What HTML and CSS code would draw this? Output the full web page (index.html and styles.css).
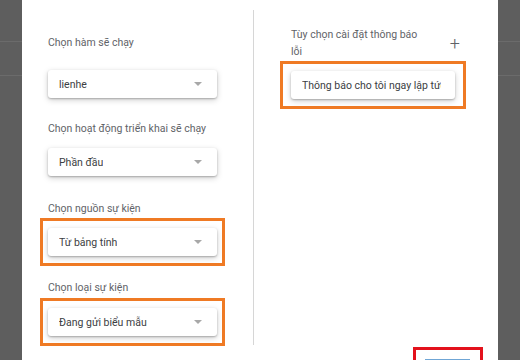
FILE: index.html
```html
<!DOCTYPE html>
<html>
<head>
  <title>Thêm trình kích hoạt</title>
  <link rel="stylesheet" href="styles.css">
</head>
<body>

  <div class="dialog">
    <div class="columns">

      <!-- Left column: function, deployment, event source, event type -->
      <div class="col-left">
        <div class="label label-first">Chọn hàm sẽ chạy</div>
        <div class="select select-first">
          <span class="value">lienhe</span>
          <span class="arrow"></span>
        </div>

        <div class="label label-second">Chọn hoạt động triển khai sẽ chạy</div>
        <div class="select select-second">
          <span class="value">Phần đầu</span>
          <span class="arrow"></span>
        </div>

        <div class="label label-third">Chọn nguồn sự kiện</div>
        <div class="highlight">
          <div class="select">
            <span class="value">Từ bảng tính</span>
            <span class="arrow"></span>
          </div>
        </div>

        <div class="label label-fourth">Chọn loại sự kiện</div>
        <div class="highlight">
          <div class="select">
            <span class="value">Đang gửi biểu mẫu</span>
            <span class="arrow"></span>
          </div>
        </div>
      </div>

      <!-- Right column: failure notification settings -->
      <div class="col-right">
        <div class="notify-head">
          <div class="label notify-label">Tùy chọn cài đặt thông báo lỗi</div>
          <span class="plus">+</span>
        </div>
        <div class="highlight highlight-right">
          <div class="select select-notify">
            <span class="value">Thông báo cho tôi ngay lập tức</span>
          </div>
        </div>
      </div>

    </div>

    <div class="footer">
      <div class="save-mark">
        <div class="save-btn"></div>
      </div>
    </div>
  </div>

</body>
</html>
```

FILE: styles.css
```css
body {
  margin: 0;
  width: 520px;
  height: 360px;
  overflow: hidden;
  font-family: Roboto, "Liberation Sans", sans-serif;
  background-color: #5e5e5e;
  background-image:
    linear-gradient(#6b6b6b, #6b6b6b),
    linear-gradient(#6b6b6b, #6b6b6b);
  background-size: 100% 1px, 100% 1px;
  background-position: 0 41px, 0 75px;
  background-repeat: no-repeat;
}

.dialog {
  margin-left: 22px;
  width: 476px;
  height: 360px;
  background: #ffffff;
  display: flex;
  flex-direction: column;
}

.columns {
  display: flex;
  margin-top: 10px;
  height: 335px;
}

.col-left {
  width: 232px;
  box-sizing: border-box;
  padding: 25px 0 0 18px;
  border-right: 1px solid #d6d6d6;
}

.col-right {
  flex: 1;
  padding: 16px 0 0 26px;
}

.label {
  font-size: 10.5px;
  line-height: 16px;
  color: #5f6368;
}

.label-first { margin-bottom: 19px; margin-left: 8px; }
.label-second { margin-bottom: 11px; margin-left: 8px; }
.label-third { margin-bottom: 1px; margin-left: 8px; }
.label-fourth { margin-bottom: 2px; margin-left: 8px; }

.select {
  width: 169px;
  height: 28px;
  box-sizing: border-box;
  padding: 0 15px 0 11px;
  display: flex;
  align-items: center;
  justify-content: space-between;
  background: #ffffff;
  border-radius: 3px;
  box-shadow: 0 1px 2px rgba(0, 0, 0, 0.25), 0 2px 6px rgba(0, 0, 0, 0.18);
}

.select-first { margin: 0 0 23px 8px; }
.select-second { margin: 0 0 25px 8px; }

.value {
  font-size: 10.5px;
  color: #3c4043;
  white-space: nowrap;
  overflow: hidden;
}

.arrow {
  width: 0;
  height: 0;
  border-left: 4px solid transparent;
  border-right: 4px solid transparent;
  border-top: 4px solid #a8a8a8;
}

.highlight {
  width: 185px;
  box-sizing: border-box;
  border: 3px solid #ef7a24;
  padding: 7px 5px;
  margin-bottom: 14px;
}

.highlight-right {
  width: 186px;
  padding: 7px 8px;
}

.notify-head {
  display: flex;
  align-items: center;
  justify-content: space-between;
  padding: 0 6px 0 11px;
  width: 186px;
  box-sizing: border-box;
  margin-bottom: 1px;
}

.notify-label {
  width: 132px;
  line-height: 17px;
}

.plus {
  font-size: 18px;
  font-weight: 300;
  color: #5f6368;
}

.select-notify {
  width: 164px;
  padding: 0 14px 0 11px;
  justify-content: flex-start;
}

.footer {
  display: flex;
  justify-content: flex-end;
  padding-right: 15px;
  margin-top: 2px;
}

.save-mark {
  width: 70px;
  height: 13px;
  box-sizing: border-box;
  border: 3px solid #e3121c;
  border-bottom: none;
  padding: 9px 10px 0 9px;
}

.save-btn {
  height: 1px;
  border-top: 1px solid #6fa6d6;
}
```
